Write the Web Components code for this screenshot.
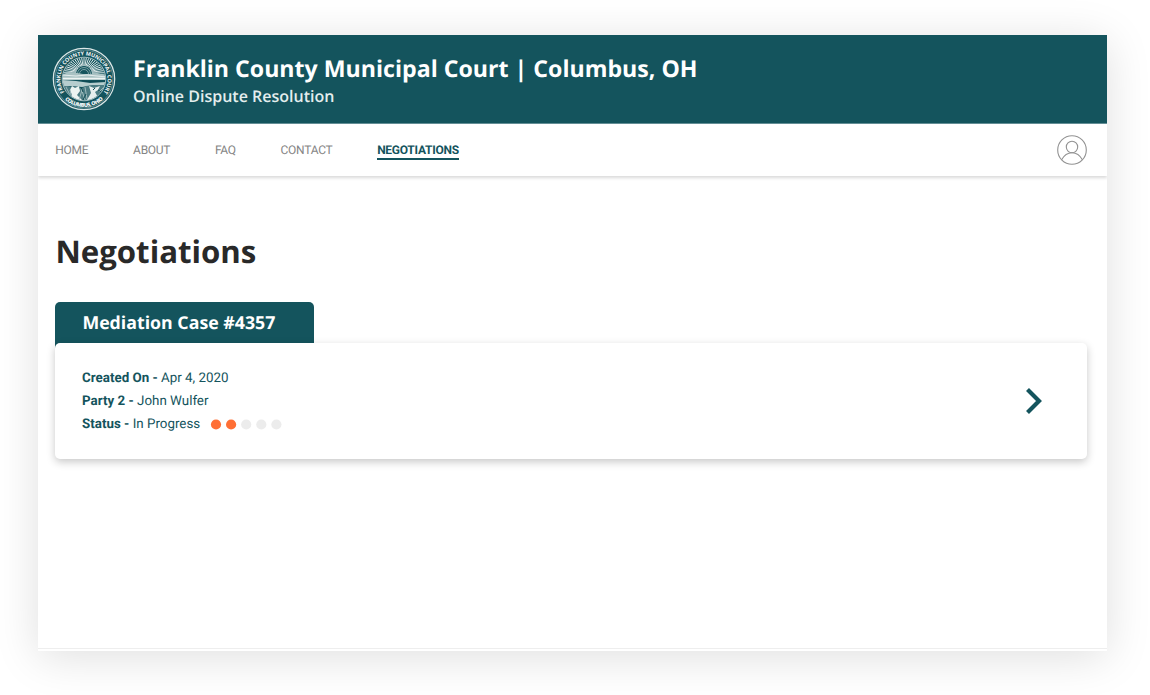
<!DOCTYPE html>
<html lang="en">
<head>
<meta charset="utf-8">
<title>Franklin County Municipal Court</title>
<style>
html,body{margin:0;height:100%}
body{background:#fff;overflow:hidden;text-rendering:geometricPrecision;font-family:Roboto,"Liberation Sans",sans-serif;--teal:#14545d;--display:"Open Sans","Noto Sans",sans-serif}
</style>
</head>
<body>
<court-app></court-app>
<script>
function component(name, html, setup) {
  const template = document.createElement('template');
  template.innerHTML = html;
  customElements.define(name, class extends HTMLElement {
    constructor() {
      super();
      this.attachShadow({mode: 'open'}).append(template.content.cloneNode(true));
    }
    connectedCallback() { if (setup) setup(this, this.shadowRoot); }
  });
}

component('court-seal', `
<style>:host{display:block;width:64px;height:64px}svg{display:block;overflow:visible}text{font-family:"Open Sans",sans-serif;font-weight:700;fill:#f4f8f8}</style>
<svg width="64" height="64" viewBox="0 0 64 64" fill="none">
  <defs>
    <path id="top" d="M13.9 47.2A23.6 23.6 0 1 1 50.1 47.2"/>
    <path id="bottom" d="M11.2 50.7A28 28 0 0 0 52.8 50.7"/>
    <clipPath id="disc"><circle cx="32" cy="32" r="21.3"/></clipPath>
  </defs>
  <circle cx="32" cy="32" r="30.7" stroke="#dce7e7" stroke-width="1.2"/>
  <circle cx="32" cy="32" r="29" stroke="#a9c1c3" stroke-width=".5"/>
  <g clip-path="url(#disc)">
    <g id="rays" stroke="#dbe7e7" stroke-width="1"></g>
    <circle cx="32" cy="26" r="6.6" fill="#14545d"/>
    <path d="M27.5 27a4.5 4.5 0 0 1 9 0M25.5 27a6.5 6.5 0 0 1 13 0" stroke="#86a9ad" stroke-width=".9"/>
    <path d="M9 28L17 25L25 26L31 27L38 27L45 26L55 29V33H9Z" fill="#a9c2c3"/>
    <path d="M10 28L24 29L35 28L55 30" stroke="#e4eded"/>
    <path d="M9 31.5H55" stroke="#eff5f4" stroke-width="1.5"/>
    <path d="M30 33.5L35 34.5L54 34" stroke="#0e4a53" stroke-width="1.2"/>
    <path d="M9 33L24 34L38 36L55 35V39L43 38L30 40L19 39L9 40Z" fill="#b7cece"/>
    <path d="M9 38L17 40L22 39L28 42L34 39L42 38L54 38V56H9Z" fill="#4b7c82"/>
    <path d="M20 39L23 41L27 39L28 44L25 48L31 54H16L20 48L18 43Z" fill="#edf4f1"/>
    <path d="M37 39L42 41L48 39L46 43L43 45L47 52L44 55L35 53L39 46Z" fill="#e6efed"/>
    <path d="M14 40L18 48M18 43L20 52M29 41L33 53M33 40L35 52M47 45L53 39M48 50L51 43M30 43L27 53" stroke="#a8c2c3" stroke-width=".9"/>
    <path d="M12 43L16 46M29 40L31 45M43 41L41 43M46 43L51 46M34 47L31 53" stroke="#104b54" stroke-width="1"/>
  </g>
  <circle cx="32" cy="32" r="21.8" stroke="#c7d8d9" stroke-width=".8"/>
  <text font-size="5.5"><textPath href="#top" textLength="102" startOffset="2.5">FRANKLIN COUNTY MUNICIPAL COURT</textPath></text>
  <text font-size="5.4" style="font-weight:800"><textPath href="#bottom" textLength="42" startOffset="2.5">COLUMBUS, OHIO</textPath></text>
</svg>`, (host, root) => {
  let d = '';
  for (let i = 0; i <= 26; i++) {
    const a = Math.PI + i * Math.PI / 26;
    d += `M${32 + 8 * Math.cos(a)} ${27 + 8 * Math.sin(a)}L${32 + 22 * Math.cos(a)} ${28 + 19 * Math.sin(a)}`;
  }
  root.getElementById('rays').innerHTML = `<path d="${d}"/>`;
});

component('court-header', `
<style>
:host{box-sizing:border-box;display:flex;align-items:center;gap:17px;height:89px;padding:0 14px;background:var(--teal);border-bottom:1px solid #648e95;color:#fff;font-family:var(--display)}
.t{display:flex;flex-direction:column;padding-top:1px}
.title{font-weight:700;font-size:23.15px;line-height:32px;white-space:pre}
.sub{font-weight:600;font-size:16px;line-height:22px;color:#e4eeee;padding-top:.5px}
</style>
<court-seal></court-seal>
<div class="t"><div class="title"><slot></slot></div><div class="sub"><slot name="sub"></slot></div></div>`);

component('nav-item', `
<style>
:host{display:block;box-sizing:border-box;height:20px;font-size:12px;letter-spacing:-.26px;line-height:20px;color:#858585;white-space:nowrap}
:host([active]){color:var(--teal);font-weight:700;border-bottom:2px solid var(--teal)}
</style><slot></slot>`);

component('user-avatar', `
<style>:host{display:block;width:30px;height:30px;margin-left:auto}svg{display:block}</style>
<svg width="30" height="30" fill="none" stroke="#929292" stroke-width="1.1"><circle cx="15" cy="15" r="14.3"/><circle cx="15" cy="12" r="5.7"/><path d="M4.6 24.8C7 20.3 10.3 17.7 15 17.7S23 20.3 25.4 24.8"/></svg>`);

component('court-nav', `
<style>:host{box-sizing:border-box;display:flex;align-items:center;height:52px;padding:0 20px 0 17.3px;gap:44.7px;background:#fff;box-shadow:0 2px 3px rgba(0,0,0,.15);position:relative;clip-path:inset(0 0 -8px 0)}</style>
<slot></slot><user-avatar></user-avatar>`);

component('detail-row', `
<style>:host{display:flex;align-items:center;height:23.2px;font-size:13.35px;color:var(--teal);white-space:pre}b{font-weight:700}</style>
<b></b><slot></slot>`, (host, root) => { root.querySelector('b').textContent = host.getAttribute('label') + ' - '; });

component('progress-dots', `
<style>:host{display:flex;margin-left:11px}svg{display:block;overflow:visible}</style><svg width="71" height="10"></svg>`, (host, root) => {
  const filled = +host.getAttribute('value');
  root.querySelector('svg').innerHTML = [0, 1, 2, 3, 4].map(n =>
    `<circle cx="${5 + n * 15.1}" cy="4.5" r="5.1" fill="${n < filled ? '#ff6f35' : '#ececec'}"/>`).join('');
});

component('case-card', `
<style>
:host{display:block}
.tab{box-sizing:border-box;width:259px;height:46px;margin-bottom:-5px;padding:1px 27px 4px;border-radius:5px 5px 0 0;background:var(--teal);color:#fff;font:700 17.75px/41px var(--display);white-space:nowrap}
.card{position:relative;box-sizing:border-box;display:flex;align-items:center;justify-content:space-between;height:116px;padding:0 45px 0 26.7px;border-radius:5px;background:#fff;box-shadow:0 3px 9px rgba(0,0,0,.22)}
.rows{padding-top:1px}
svg{display:block}
</style>
<div class="tab"><slot name="title"></slot></div>
<div class="card"><div class="rows"><slot></slot></div>
<svg width="16" height="26" fill="none"><path d="M1.5 1.5L13 13L1.5 24.5" stroke="#14545d" stroke-width="4.2"/></svg></div>`);

component('court-app', `
<style>
:host{display:block;padding:35px 43px 44px 38px}
.window{display:flex;flex-direction:column;height:616px;background:#fff;box-shadow:0 6px 42px rgba(0,0,0,.13)}
main{flex:1;padding:54px 20.5px 0 17.4px}
h1{margin:0 0 28px;font:700 31.2px/44px var(--display);color:#292929}
footer{height:2px;border-top:1px solid #eee}
</style>
<div class="window">
  <court-header><span id="title">Franklin County Municipal Court | Columbus, OH</span><span slot="sub">Online Dispute Resolution</span></court-header>
  <court-nav><nav-item>HOME</nav-item><nav-item>ABOUT</nav-item><nav-item>FAQ</nav-item><nav-item>CONTACT</nav-item><nav-item active>NEGOTIATIONS</nav-item></court-nav>
  <main>
    <h1>Negotiations</h1>
    <case-card><span slot="title">Mediation Case #4357</span>
      <detail-row label="Created On">Apr 4, 2020</detail-row>
      <detail-row label="Party 2">John Wulfer</detail-row>
      <detail-row label="Status">In Progress<progress-dots value="2"></progress-dots></detail-row>
    </case-card>
  </main>
  <footer></footer>
</div>`);
</script>
</body>
</html>
